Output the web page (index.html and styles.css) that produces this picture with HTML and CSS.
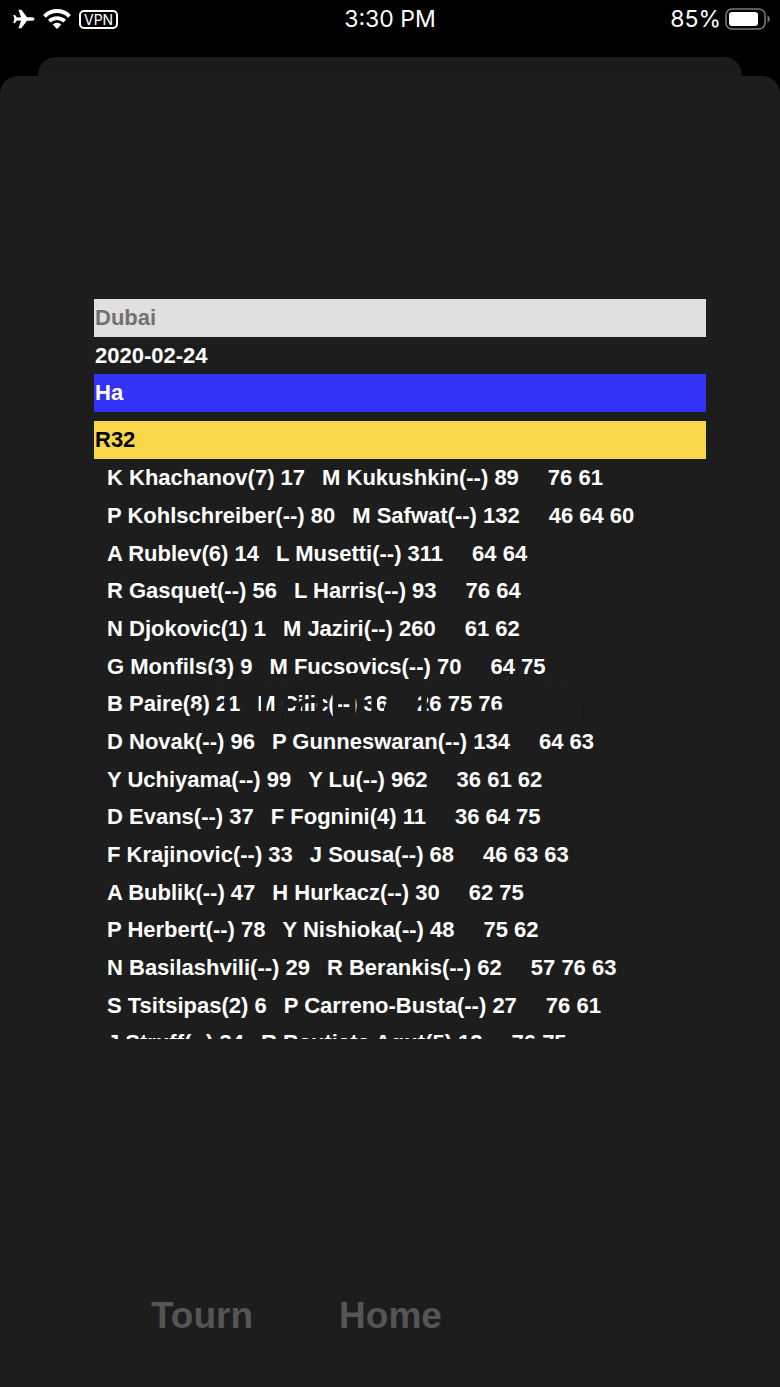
FILE: index.html
```html
<!DOCTYPE html>
<html lang="en">
<head>
  <meta charset="UTF-8">
  <meta name="viewport" content="width=device-width, initial-scale=1">
  <title>Dubai 2020</title>
  <link rel="stylesheet" href="styles.css">
</head>
<body>

  <header class="status-bar">
    <div class="status-left">
      <svg width="22" height="20" viewBox="0 0 22 20" fill="#fff"><path d="M21.500 10c0-1.100-1.200-1.800-2.500-1.800h-5L8.400.8H5.400l2.700 7.500-4.100.2L2 6H.3l1 4-1 4H2l2-2.500 4.100.2-2.700 7.500h3l5.600-7.400h5c1.300 0 2.500-.7 2.500-1.800z"/></svg>
      <svg width="28" height="22" viewBox="0 0 28 22" fill="none" stroke="#fff"><path d="M1.500 8.300a17.500 17.500 0 0 1 25 0" stroke-width="4"/><path d="M6.300 13.200a11 11 0 0 1 15.400 0" stroke-width="3.800"/><path d="M14 21l-4.300-4.400a6.200 6.200 0 0 1 8.600 0z" fill="#fff" stroke="none"/></svg>
      <span class="vpn">VPN</span>
    </div>
    <div class="clock">3:30 PM</div>
    <div class="status-right">
      <span>85%</span>
      <svg width="46" height="22" viewBox="0 0 46 22"><rect x="1" y="1" width="39" height="20" rx="6" fill="none" stroke="#777" stroke-width="1.600"/><rect x="4" y="4" width="29" height="14" rx="3" fill="#fff"/><path d="M42.500 7.500c3 1.500 3 5.500 0 7z" fill="#777"/></svg>
    </div>
  </header>

  <div class="back-sheet"></div>
  <main class="sheet">
    <div class="results">
      <div class="bar bar-name">Dubai</div>
      <div class="bar bar-date">2020-02-24</div>
      <div class="bar bar-surface">Ha</div>
      <div class="bar bar-round">R32</div>
      <ul class="matches">
        <li><span>K Khachanov(7) 17</span><span>M Kukushkin(--) 89</span><span class="score">76 61</span></li>
        <li><span>P Kohlschreiber(--) 80</span><span>M Safwat(--) 132</span><span class="score">46 64 60</span></li>
        <li><span>A Rublev(6) 14</span><span>L Musetti(--) 311</span><span class="score">64 64</span></li>
        <li><span>R Gasquet(--) 56</span><span>L Harris(--) 93</span><span class="score">76 64</span></li>
        <li><span>N Djokovic(1) 1</span><span>M Jaziri(--) 260</span><span class="score">61 62</span></li>
        <li><span>G Monfils(3) 9</span><span>M Fucsovics(--) 70</span><span class="score">64 75</span></li>
        <li><span>B Paire(8) 21</span><span>M Cilic(--) 36</span><span class="score">26 75 76</span></li>
        <li><span>D Novak(--) 96</span><span>P Gunneswaran(--) 134</span><span class="score">64 63</span></li>
        <li><span>Y Uchiyama(--) 99</span><span>Y Lu(--) 962</span><span class="score">36 61 62</span></li>
        <li><span>D Evans(--) 37</span><span>F Fognini(4) 11</span><span class="score">36 64 75</span></li>
        <li><span>F Krajinovic(--) 33</span><span>J Sousa(--) 68</span><span class="score">46 63 63</span></li>
        <li><span>A Bublik(--) 47</span><span>H Hurkacz(--) 30</span><span class="score">62 75</span></li>
        <li><span>P Herbert(--) 78</span><span>Y Nishioka(--) 48</span><span class="score">75 62</span></li>
        <li><span>N Basilashvili(--) 29</span><span>R Berankis(--) 62</span><span class="score">57 76 63</span></li>
        <li><span>S Tsitsipas(2) 6</span><span>P Carreno-Busta(--) 27</span><span class="score">76 61</span></li>
        <li><span>J Struff(--) 34</span><span>R Bautista Agut(5) 12</span><span class="score">76 75</span></li>
      </ul>
    </div>
    <div class="watermark">Jonathan.com</div>
    <nav class="actions">
      <button type="button">Tourn</button>
      <button type="button">Home</button>
    </nav>
  </main>

</body>
</html>
```
FILE: styles.css
```css
* { box-sizing: border-box; }
body { margin: 0; background: #000; color: #fff; font-family: "Liberation Sans", Arial, sans-serif; min-height: 100vh; display: flex; flex-direction: column; }

.status-bar { display: grid; grid-template-columns: 1fr auto 1fr; align-items: center; height: 38px; margin-bottom: 19px; padding: 0 9px; font-family: Inter, sans-serif; font-size: 23px; }
.status-left { display: flex; align-items: center; gap: 8px; padding-left: 4px; }
.status-right { display: flex; align-items: center; justify-content: flex-end; gap: 4px; }
.vpn { border: 2px solid #fff; border-radius: 5px; padding: 0 3px; font-size: 14px; line-height: 15px; }

.back-sheet { height: 19px; margin: 0 38px; background: #1b1b1b; border-radius: 18px 18px 0 0; }
.sheet { position: relative; flex: 1; display: flex; flex-direction: column; background: #1d1d1d; border-radius: 18px 18px 0 0; padding: 223px 74px 46px 94px; }

.results { height: 740px; overflow: hidden; font-size: 22px; font-weight: bold; }
.bar { height: 38px; line-height: 38px; padding-left: 1px; }
.bar-name { background: #e0e0e0; color: #717171; }
.bar-date { height: 37px; }
.bar-surface { background: #3333f8; }
.bar-round { margin-top: 9px; background: #f8d84a; color: #000; }

.matches { list-style: none; margin: 0; padding: 0 0 0 13px; }
.matches li { display: flex; gap: 17px; height: 38px; line-height: 38px; white-space: nowrap; }
.matches li:nth-child(3n) { height: 37px; }
.score { margin-left: 12px; }

.watermark { position: absolute; top: 590px; left: 0; right: 0; text-align: center; font-size: 64px; line-height: 64px; color: #1b1b1b; pointer-events: none; }

.actions { display: flex; gap: 86px; margin-top: auto; padding-left: 57px; }
.actions button { border: 0; padding: 0; background: none; color: #555; font: bold 37px/50px "Liberation Sans", Arial, sans-serif; cursor: pointer; }
```
